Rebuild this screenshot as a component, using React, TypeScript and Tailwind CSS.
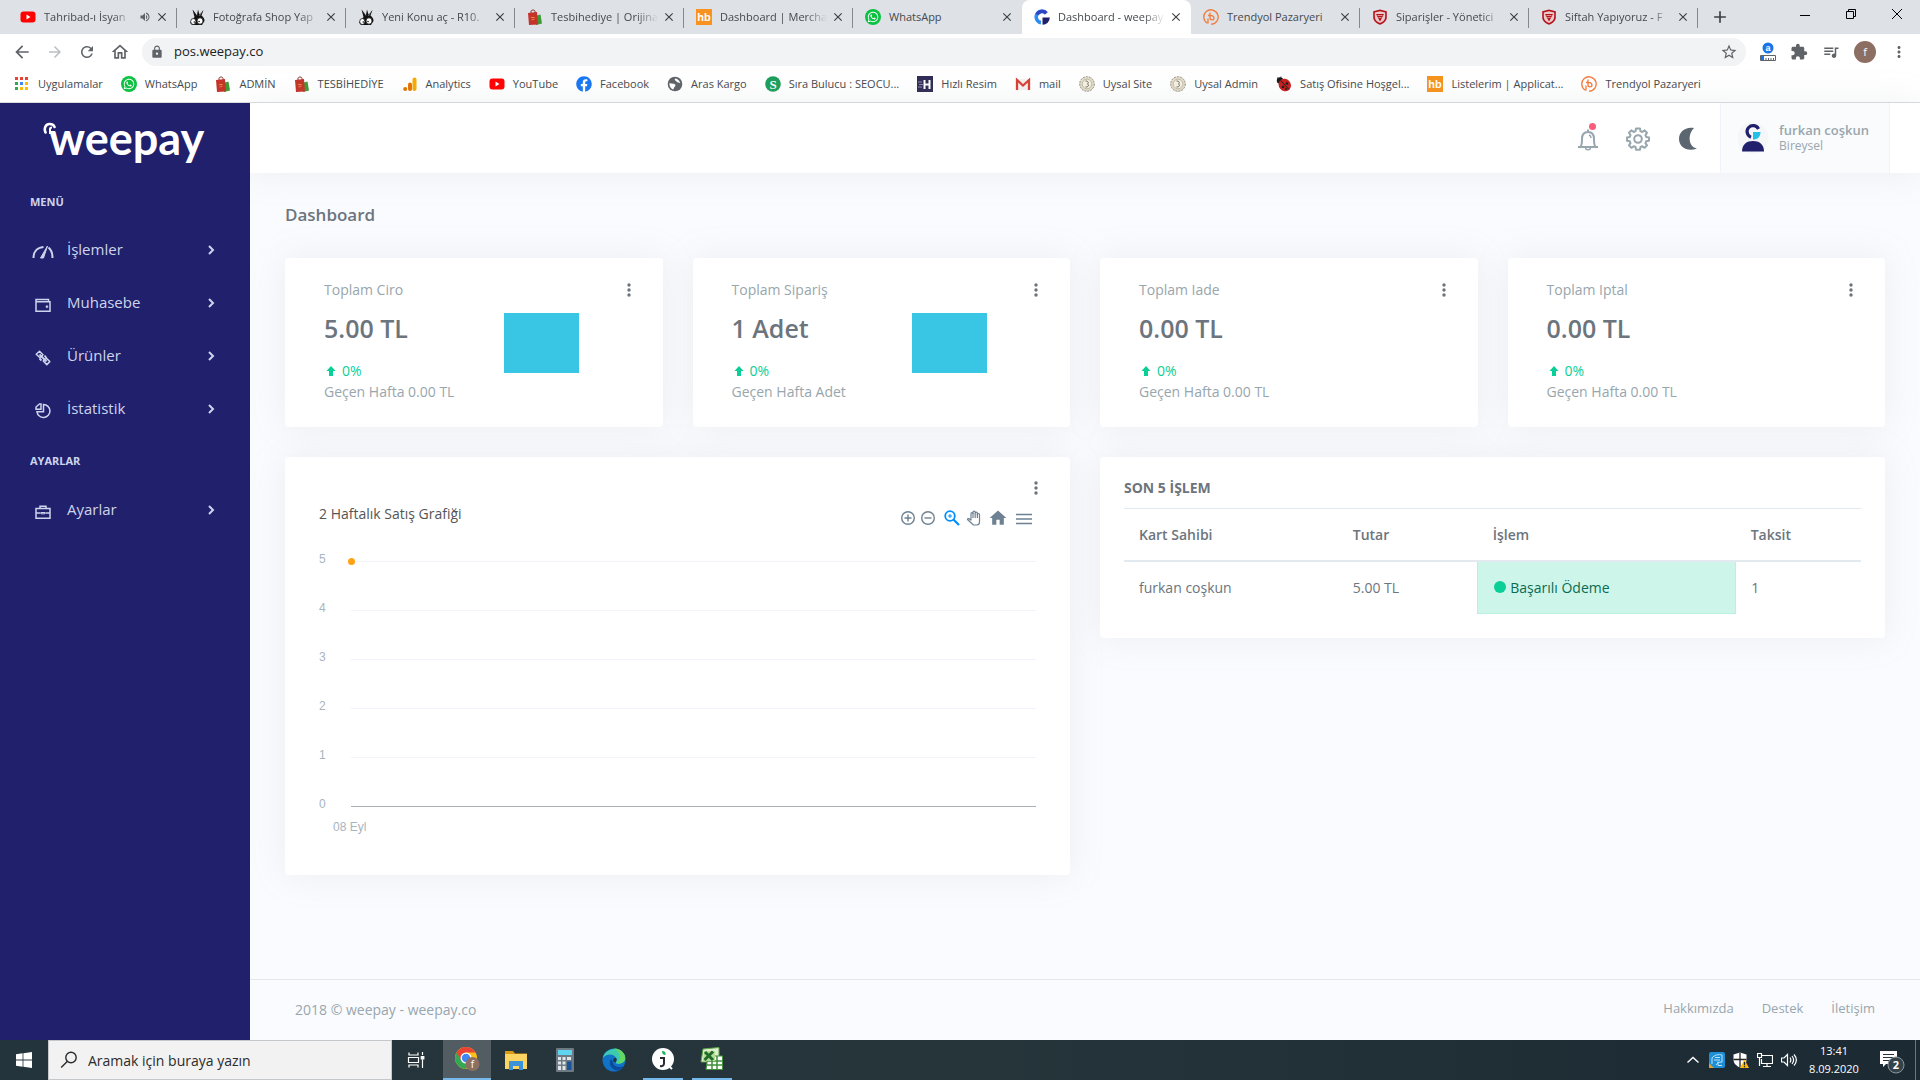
import type { ReactNode } from "react";
import { FaFacebook, FaWhatsapp } from "react-icons/fa";
import {
  MdAdd,
  MdArrowBack,
  MdArrowForward,
  MdClose,
  MdExtension,
  MdHome,
  MdLock,
  MdMoreVert,
  MdOutlineHome,
  MdQueueMusic,
  MdRefresh,
  MdStarOutline,
  MdVolumeUp,
} from "react-icons/md";

/* ---------- favicons ---------- */

const YoutubeIcon = () => (
  <svg viewBox="0 0 16 16" className="size-4 shrink-0">
    <rect x="0.5" y="2.5" width="15" height="11" rx="3" fill="#f00" />
    <path d="M6.5 5.5 10.5 8l-4 2.500z" fill="#fff" />
  </svg>
);

const WhatsappIcon = () => (
  <span className="flex size-4 shrink-0 items-center justify-center rounded-full bg-[#0dc143]">
    <FaWhatsapp className="size-3 text-white" />
  </span>
);

const RabbitIcon = () => (
  <svg viewBox="0 0 16 16" className="size-4 shrink-0">
    <path d="M3.500 0.500 8 6 9 0.500l1.500 5L14.500 1 12.500 6.500c2 1.500 3 3 3 5.500L13 16H3L1 13.500 5.500 8z" fill="#111" />
    <path d="M5.500 2 8 6.500M12.500 3 10.500 7" stroke="#ddd" strokeWidth="0.500" />
    <ellipse cx="4.300" cy="12.500" rx="2.600" ry="3" fill="#fff" stroke="#111" strokeWidth="0.800" />
    <ellipse cx="11" cy="12" rx="3" ry="3.200" fill="#fff" stroke="#111" strokeWidth="0.800" />
    <circle cx="5.300" cy="13" r="0.800" fill="#111" />
    <circle cx="10" cy="12.500" r="0.800" fill="#111" />
  </svg>
);

const BagIcon = () => (
  <svg viewBox="0 0 16 16" className="size-4 shrink-0">
    <path d="M4 5V2.500C4 0.500 8 0.500 8 2.500V5" fill="none" stroke="#7d2a22" />
    <path d="M8 7l5.500-1.500 1.500 9L9 16z" fill="#3f9b35" />
    <path d="M1 4 10 3l1 12.500-9 0.500z" fill="#c5342b" />
    <path d="M4 8.500h3.500M4.500 11l3-1" stroke="#e58b3a" />
  </svg>
);

const HbIcon = () => (
  <svg viewBox="0 0 16 16" className="size-4 shrink-0">
    <rect width="16" height="16" fill="#f7931e" />
    <text x="8" y="12" textAnchor="middle" fontFamily="Liberation Sans" fontWeight="700" fontSize="11" fill="#fff">
      hb
    </text>
  </svg>
);

const WeepayIcon = () => (
  <svg viewBox="0 0 16 16" className="size-4 shrink-0">
    <path d="M12.300 4.300A5.700 5.700 0 1 0 7 13.600" fill="none" stroke="#2b8df0" strokeWidth="3.600" />
    <path d="M12.300 4.300A5.700 5.700 0 0 0 3 5.500" fill="none" stroke="#2f45c4" strokeWidth="3.600" />
    <path d="M8.500 8.500H15.800a7.200 7.200 0 0 1-7.300 7.300z" fill="#1f1f6b" />
  </svg>
);

const TrendyolIcon = () => (
  <svg viewBox="0 0 16 16" className="size-4 shrink-0" fill="none" stroke="#f27a3a" strokeWidth="1.300">
    <path d="M4.500 14.300A7.200 7.200 0 1 1 8 15.200" />
    <path d="M7 3.500V9c0 2.500 4 2.500 4 0S8 6 5 6.500M5 9.500v5" />
  </svg>
);

const ShieldIcon = () => (
  <svg viewBox="0 0 16 16" className="size-4 shrink-0">
    <path d="M8 0.500 14.800 2.200V8c0 4-3 6.300-6.800 7.800C4.200 14.300 1.200 12 1.200 8V2.200z" fill="#b5121b" />
    <path d="M8 2.200 13.200 3.500V8c0 3-2.200 4.800-5.200 6C5 12.800 2.800 11 2.800 8V3.500z" fill="#e9c9ca" />
    <path d="M4 5h8L8 12.500z" fill="#b5121b" />
    <path d="M5.500 6.500h5M6.500 8.500h3" stroke="#e9c9ca" strokeWidth="0.700" />
  </svg>
);

const AppsIcon = () => (
  <svg viewBox="0 0 16 16" className="size-4 shrink-0">
    <path d="M1 1h3v3H1zM6 1h3v3H6zM11 1h3v3h-3z" fill="#ea4335" />
    <path d="M1 6h3v3H1zM1 11h3v3H1z" fill="#34a853" />
    <path d="M6 6h3v3H6z" fill="#4285f4" />
    <path d="M11 6h3v3h-3zM6 11h3v3H6zM11 11h3v3h-3z" fill="#fbbc05" />
  </svg>
);

const AnalyticsIcon = () => (
  <svg viewBox="0 0 16 16" className="size-4 shrink-0">
    <rect x="10.500" y="1.500" width="4" height="13.500" rx="2" fill="#f9ab00" />
    <rect x="6" y="6.500" width="4" height="8.500" rx="2" fill="#e37400" />
    <circle cx="3.200" cy="13" r="2" fill="#e37400" />
  </svg>
);

const GlobeIcon = () => (
  <svg viewBox="0 0 16 16" className="size-4 shrink-0">
    <circle cx="8" cy="8" r="7.300" fill="#5f6368" />
    <path d="M8 2.500c-1 2 1 2 2 3.500 1 1 3 0 3.500 2C13 6 12 3 8 2.500zM2.500 7c2 1 5 0 6 2 0 2-2 2-2 4.500C4 13 2 10 2.500 7z" fill="#fff" />
  </svg>
);

const SeoIcon = () => (
  <svg viewBox="0 0 16 16" className="size-4 shrink-0">
    <circle cx="8" cy="8" r="7.800" fill="#1d9f5b" />
    <text x="8" y="12.500" textAnchor="middle" fontFamily="Liberation Serif" fontWeight="700" fontSize="13" fill="#fff">
      S
    </text>
  </svg>
);

const HizliIcon = () => (
  <svg viewBox="0 0 16 16" className="size-4 shrink-0">
    <rect width="16" height="16" fill="#302c55" />
    <path d="M1 6h4M2 8.500h4M1 11h4" stroke="#8d8ab0" />
    <path d="M7.500 4v9M12.500 4v9M7.500 8.500h5" stroke="#fff" strokeWidth="2" />
  </svg>
);

const MailIcon = () => (
  <svg viewBox="0 0 16 16" className="size-4 shrink-0">
    <path d="M1 3h14v11H1z" fill="#f4f0ef" />
    <path d="M2 14V4l6 5.500L14 4v10" fill="none" stroke="#d93f35" strokeWidth="2.300" />
  </svg>
);

const UysalIcon = () => (
  <svg viewBox="0 0 16 16" className="size-4 shrink-0">
    <circle cx="8" cy="8" r="7.300" fill="#e3dccb" stroke="#8d8672" strokeWidth="0.900" strokeDasharray="2 1" />
    <circle cx="8" cy="8" r="4.800" fill="#f4f0e4" stroke="#a59d87" strokeWidth="0.600" />
    <path d="M6.500 5c3 0 3.500 2 2 3 2 1 1 3-2 3" fill="none" stroke="#6c6553" />
  </svg>
);

const LadybugIcon = () => (
  <svg viewBox="0 0 16 16" className="size-4 shrink-0">
    <circle cx="4" cy="4.500" r="3.200" fill="#1a1a1a" />
    <path d="M1 1.500 3 3M5 0.500 4.500 3" stroke="#1a1a1a" strokeWidth="0.700" />
    <ellipse cx="8.800" cy="9" rx="6" ry="6.500" transform="rotate(-40 8.800 9)" fill="#c91f1f" />
    <path d="M4.500 4.500 13 13.500" stroke="#1a1a1a" />
    <circle cx="7" cy="11" r="1.300" fill="#1a1a1a" />
    <circle cx="11" cy="7.500" r="1.300" fill="#1a1a1a" />
    <circle cx="10" cy="13" r="1" fill="#1a1a1a" />
  </svg>
);

/* ---------- browser chrome ---------- */

type Tab = { title: string; icon: ReactNode; active?: boolean; sound?: boolean; noDivider?: boolean };

const tabs: Tab[] = [
  { title: "Tahribad-ı İsyan", icon: <YoutubeIcon />, sound: true },
  { title: "Fotoğrafa Shop Yap", icon: <RabbitIcon /> },
  { title: "Yeni Konu aç - R10.", icon: <RabbitIcon /> },
  { title: "Tesbihediye | Orijina", icon: <BagIcon /> },
  { title: "Dashboard | Mercha", icon: <HbIcon /> },
  { title: "WhatsApp", icon: <WhatsappIcon />, noDivider: true },
  { title: "Dashboard - weepay", icon: <WeepayIcon />, active: true },
  { title: "Trendyol Pazaryeri", icon: <TrendyolIcon /> },
  { title: "Siparişler - Yönetici", icon: <ShieldIcon /> },
  { title: "Siftah Yapıyoruz - F", icon: <ShieldIcon /> },
];

const bookmarks = [
  { title: "Uygulamalar", icon: <AppsIcon /> },
  { title: "WhatsApp", icon: <WhatsappIcon /> },
  { title: "ADMİN", icon: <BagIcon /> },
  { title: "TESBİHEDİYE", icon: <BagIcon /> },
  { title: "Analytics", icon: <AnalyticsIcon /> },
  { title: "YouTube", icon: <YoutubeIcon /> },
  { title: "Facebook", icon: <FaFacebook className="size-4 shrink-0 text-[#1877f2]" /> },
  { title: "Aras Kargo", icon: <GlobeIcon /> },
  { title: "Sıra Bulucu : SEOCU...", icon: <SeoIcon /> },
  { title: "Hızlı Resim", icon: <HizliIcon /> },
  { title: "mail", icon: <MailIcon /> },
  { title: "Uysal Site", icon: <UysalIcon /> },
  { title: "Uysal Admin", icon: <UysalIcon /> },
  { title: "Satış Ofisine Hoşgel...", icon: <LadybugIcon /> },
  { title: "Listelerim | Applicat...", icon: <HbIcon /> },
  { title: "Trendyol Pazaryeri", icon: <TrendyolIcon /> },
];

function TabStrip() {
  return (
    <div className="flex h-[34px] items-stretch bg-[#dee1e6] pl-2">
      {tabs.map((tab) => (
        <div
          key={tab.title}
          className={`relative flex w-[169px] items-center pl-3 pr-2 ${tab.active ? "rounded-t-lg bg-white" : ""}`}
        >
          {tab.icon}
          <span
            className={`ml-2 min-w-0 flex-1 whitespace-nowrap text-[11px] text-[#45494d] ${
              tab.title.length > 15 && tab.title !== "Trendyol Pazaryeri"
                ? "[mask-image:linear-gradient(to_right,black_80%,transparent)]"
                : ""
            }`}
          >
            {tab.title}
          </span>
          {tab.sound && <MdVolumeUp className="ml-2 size-3 text-[#5f6368]" />}
          <button aria-label="Kapat" className="ml-1 text-[#3c4043]">
            <MdClose className="size-3.5" />
          </button>
          {!tab.active && !tab.noDivider && <span className="absolute right-0 top-2 h-5 w-px bg-[#85888c]" />}
        </div>
      ))}
      <button aria-label="Yeni sekme" className="px-3 text-[#3c4043]">
        <MdAdd className="size-5" />
      </button>
      <div className="ml-auto flex items-start pt-1.5 text-black">
        <button aria-label="Küçült" className="flex w-[46px] justify-center">
          <svg viewBox="0 0 16 16" className="size-4">
            <path d="M3 9.500h10" stroke="currentColor" />
          </svg>
        </button>
        <button aria-label="Önceki boyut" className="flex w-[46px] justify-center">
          <svg viewBox="0 0 16 16" className="size-4" fill="none" stroke="currentColor">
            <path d="M3.500 5.500h7v7h-7zM5.500 5.500v-2h7v7h-2" />
          </svg>
        </button>
        <button aria-label="Pencereyi kapat" className="flex w-[46px] justify-center">
          <svg viewBox="0 0 16 16" className="size-4">
            <path d="m3 3 10 10M13 3 3 13" stroke="currentColor" />
          </svg>
        </button>
      </div>
    </div>
  );
}

function AddressBar() {
  return (
    <div className="flex h-[36px] items-center bg-white px-3 text-[#5f6368]">
      <div className="flex items-center gap-3.5 pr-3">
        <button aria-label="Geri">
          <MdArrowBack className="size-5" />
        </button>
        <button aria-label="İleri" className="text-[#bcbec1]">
          <MdArrowForward className="size-[18px]" />
        </button>
        <button aria-label="Yenile">
          <MdRefresh className="size-[18px]" />
        </button>
        <button aria-label="Ana sayfa">
          <MdOutlineHome className="size-5" />
        </button>
      </div>
      <div className="flex h-7 flex-1 items-center rounded-full bg-[#f1f3f4] pl-2 pr-2">
        <MdLock className="size-3.5" />
        <input
          aria-label="Adres çubuğu"
          defaultValue="pos.weepay.co"
          className="ml-2.5 flex-1 bg-transparent text-[13px] text-[#202124] outline-none"
        />
        <MdStarOutline className="size-[18px]" />
      </div>
      <div className="ml-3.5 flex items-center gap-3.5">
        <svg viewBox="0 0 16 20" className="h-5 w-4">
          <circle cx="8" cy="6" r="5.500" fill="#1a73e8" />
          <text x="8" y="9" textAnchor="middle" fontFamily="Liberation Sans" fontWeight="700" fontSize="9" fill="#fff">
            a
          </text>
          <path d="M0.500 13.500h15v5H0.500z" fill="#fff" stroke="#5f6368" />
          <path d="M1 14h3v4H1z" fill="#1a73e8" />
          <path d="M6 18v-2M8.500 18v-2M11 18v-2M13.500 18v-2" stroke="#5f6368" />
        </svg>
        <MdExtension className="size-[18px]" />
        <MdQueueMusic className="size-[18px]" />
        <span className="flex size-[22px] items-center justify-center rounded-full bg-[#8d6e63] text-[11px] text-white">
          f
        </span>
        <MdMoreVert className="size-[18px]" />
      </div>
    </div>
  );
}

function BookmarksBar() {
  return (
    <nav className="flex h-[33px] items-center gap-[18px] whitespace-nowrap border-b border-[#dadce0] bg-white pb-1 pl-3.5">
      {bookmarks.map((b) => (
        <a key={b.title} href="#" className="flex items-center gap-2 text-[11px] text-[#45494d]">
          {b.icon}
          {b.title}
        </a>
      ))}
    </nav>
  );
}

/* ---------- sidebar ---------- */

const stroke = { fill: "none", stroke: "currentColor", strokeWidth: 1.5 };

const MeterIcon = () => (
  <svg viewBox="0 0 22 16" className="h-4 w-[22px]" {...stroke} strokeWidth={2}>
    <path d="M1.500 14C1.500 8 5 3.500 11.500 3" />
    <path d="M16.500 3.500c2.500 2 4 6 4 10.500" />
    <path d="M15.500 2 8.500 14h3z" fill="currentColor" strokeWidth={1} />
  </svg>
);

const WalletIcon = () => (
  <svg viewBox="0 0 16 16" className="size-4" {...stroke}>
    <path d="M1 4.800V2.500h12.500v2M1 4.800v9.500h14V4.800z" />
    <path d="M11 8.800h1.800v1.800H11z" fill="currentColor" strokeWidth={0.500} />
  </svg>
);

const ChainIcon = () => (
  <svg viewBox="0 0 16 16" className="size-4" {...stroke}>
    <path d="M4.500 1.200 8 4.700 5 7.700 1.200 4.200zM11.500 8.300l3.300 3.300-3 3L8.200 11z" strokeLinejoin="round" />
    <path d="m4.500 4.500 7 7M9.500 5.500l2 2.500M4.500 8.500l2 2" strokeWidth={1.800} />
  </svg>
);

const PieIcon = () => (
  <svg viewBox="0 0 16 16" className="size-4" {...stroke}>
    <path d="M8.500 1.500A6.500 6.500 0 1 1 2 8.800h6.500z" />
    <path d="M6 1H4.500L1 4v2.200h5z" />
  </svg>
);

const BriefcaseIcon = () => (
  <svg viewBox="0 0 16 16" className="size-4" {...stroke}>
    <path d="M1 4.500h14v9.800H1zM5 4.500V2.200h6v2.300M1 9h4.500M10.500 9H15" />
    <path d="M6 8.500h4v1.300H6z" strokeWidth={1} />
  </svg>
);

function NavItem({ icon, label }: { icon: ReactNode; label: string }) {
  return (
    <li>
      <a href="#" className="flex h-[53px] items-center pl-8 pr-[35px] text-[15px] text-[#ced4ec]">
        <span className="flex w-[22px] justify-center pt-1">{icon}</span>
        <span className="ml-[13px] flex-1">{label}</span>
        <svg viewBox="0 0 8 12" className="h-3 w-2" fill="none" stroke="currentColor" strokeWidth="2">
          <path d="m2 2 4 4-4 4" />
        </svg>
      </a>
    </li>
  );
}

function Sidebar() {
  return (
    <aside className="relative z-10 w-[250px] shrink-0 bg-[#20206c]">
      <a href="#" aria-label="weepay" className="relative flex h-[70px] items-center pl-[49px]">
        <span className="font-[Lato] text-[45px] font-bold leading-none text-white">weepay</span>
        <svg viewBox="0 0 14 12" className="absolute left-[43px] top-[19px] h-3 w-3.5" fill="none" stroke="#fff">
          <path d="M2.500 10.500C0.500 6 3 2 6.500 2c3 0 4.500 1 5 3" strokeWidth="2.600" strokeLinecap="round" />
          <path d="M7 12V7c0-1 1-1.500 2-1.500" strokeWidth="2" />
        </svg>
      </a>
      <nav>
        <h2 className="flex h-[50px] items-center pl-[30px] pt-2 text-[11px] font-bold text-[#ced4ec]">MENÜ</h2>
        <ul>
          <NavItem icon={<MeterIcon />} label="İşlemler" />
          <NavItem icon={<WalletIcon />} label="Muhasebe" />
          <NavItem icon={<ChainIcon />} label="Ürünler" />
          <NavItem icon={<PieIcon />} label="İstatistik" />
        </ul>
        <h2 className="flex h-12 items-center pl-[30px] pt-1 text-[11px] font-bold text-[#ced4ec]">AYARLAR</h2>
        <ul>
          <NavItem icon={<BriefcaseIcon />} label="Ayarlar" />
        </ul>
      </nav>
    </aside>
  );
}

/* ---------- page ---------- */

function TopBar() {
  return (
    <header className="flex h-[70px] items-center justify-end bg-white pr-[30px] text-[#98a6ad] shadow-[0_0_35px_0_rgba(154,161,171,0.15)]">
      <div className="mr-5 flex items-center gap-[26px] pt-0.5">
        <button aria-label="Bildirimler" className="relative">
          <svg viewBox="0 0 24 24" className="size-6" fill="none" stroke="currentColor" strokeWidth="2">
            <path d="M2 20h20M4.500 20C6 18 6 16 6 12c0-4.500 2.500-7 6-7s6 2.500 6 7c0 4 0 6 1.500 8M12 5V2.500" />
            <path d="M9.500 20.500c0 3 5 3 5 0M13 8c1.500 0.500 2 1.500 2 3" strokeWidth="1.500" />
          </svg>
          <span className="absolute -top-1 right-1 size-[7px] rounded-full bg-[#fa5c7c]" />
        </button>
        <button aria-label="Ayarlar">
          <svg viewBox="0 0 24 24" className="size-6" fill="none" stroke="currentColor" strokeWidth="2">
            <path
              strokeLinejoin="round"
              d="M10 1.500h4l0.500 2.700 1.800 0.800 2.300-1.600 2.400 2.400-1.500 2.300 0.700 1.900 2.800 0.400v3.400l-2.800 0.500-0.700 1.800 1.500 2.300-2.400 2.400-2.300-1.500-1.800 0.700-0.500 2.800h-4l-0.500-2.800-1.800-0.700-2.300 1.500L3 18.400l1.500-2.300-0.700-1.800L1 13.800v-3.400l2.800-0.400 0.700-1.900L3 5.800l2.400-2.400L7.700 5l1.800-0.800z"
            />
            <circle cx="12" cy="12" r="3.800" />
          </svg>
        </button>
        <button aria-label="Karanlık mod">
          <svg viewBox="0 0 24 24" className="size-6">
            <path d="M18 1C9-0.500 3 5 3 12c0 8 8.500 13.500 18 9.500C12 20 11.500 7 18 1z" fill="#5c6670" />
          </svg>
        </button>
      </div>
      <button className="flex h-full items-center border-x border-[#f1f3fa] bg-[#fafbfd] pl-4 pr-5 text-left">
        <svg viewBox="0 0 32 32" className="size-8">
          <circle cx="16" cy="16" r="15.500" fill="#f5f6f8" />
          <path d="M5 29.500C5 22 10 19 16 19s11 3 11 10.500z" fill="#20206c" />
          <path d="M21.500 7A6 6 0 1 0 14 15.200" fill="none" stroke="#20206c" strokeWidth="3.200" />
          <path d="M16 10h7.500c0 5-3 7.500-7.500 7.500z" fill="#23bfe6" />
        </svg>
        <span className="ml-2.5">
          <span className="block text-[13px] font-semibold leading-4">furkan coşkun</span>
          <span className="block text-[12px] leading-4">Bireysel</span>
        </span>
      </button>
    </header>
  );
}

const MoreDots = () => (
  <button aria-label="Seçenekler" className="text-[#6c757d]">
    <svg viewBox="0 0 4 16" className="h-4 w-1" fill="currentColor">
      <circle cx="2" cy="3" r="1.700" />
      <circle cx="2" cy="8" r="1.700" />
      <circle cx="2" cy="13" r="1.700" />
    </svg>
  </button>
);

const card = "rounded bg-white shadow-[0_0_35px_0_rgba(154,161,171,0.15)]";

type Stat = { label: string; value: string; last: string; chart?: boolean };

const stats: Stat[] = [
  { label: "Toplam Ciro", value: "5.00 TL", last: "Geçen Hafta 0.00 TL", chart: true },
  { label: "Toplam Sipariş", value: "1 Adet", last: "Geçen Hafta Adet", chart: true },
  { label: "Toplam Iade", value: "0.00 TL", last: "Geçen Hafta 0.00 TL" },
  { label: "Toplam Iptal", value: "0.00 TL", last: "Geçen Hafta 0.00 TL" },
];

function StatCard({ label, value, last, chart }: Stat) {
  return (
    <section className={`${card} flex h-[169px] pl-[39px] pr-8 pt-5`}>
      <div className="w-[180px] text-[14px] text-[#98a6ad]">
        <h3 className="leading-6">{label}</h3>
        <p className="mt-2.5 text-[25px] font-semibold leading-8 text-[#6c757d]">{value}</p>
        <p className="mt-4 flex items-center leading-[21px] text-[#0acf97]">
          <svg viewBox="0 0 14 14" className="mr-1 size-3.5">
            <path d="M7 2 11.500 7H9v5H5V7H2.500z" fill="currentColor" />
          </svg>
          0%
        </p>
        <p className="leading-[21px]">{last}</p>
      </div>
      <div className="flex-1">{chart && <div className="mt-[35px] h-[60px] w-[75px] bg-[#39c6e5]" />}</div>
      <div className="pt-0.5">
        <MoreDots />
      </div>
    </section>
  );
}

function ChartToolbar() {
  return (
    <div className="flex items-center text-[#6e8192]">
      <button aria-label="Yakınlaştır">
        <svg viewBox="0 0 20 20" className="size-5" fill="none" stroke="currentColor" strokeWidth="1.400">
          <path d="M10 6.500v7M6.500 10h7" />
          <circle cx="10" cy="10" r="6.300" />
        </svg>
      </button>
      <button aria-label="Uzaklaştır">
        <svg viewBox="0 0 20 20" className="size-5" fill="none" stroke="currentColor" strokeWidth="1.400">
          <path d="M6.500 10h7" />
          <circle cx="10" cy="10" r="6.300" />
        </svg>
      </button>
      <button aria-label="Seçimi yakınlaştır" className="ml-1 text-[#008ffb]">
        <svg viewBox="0 0 20 20" className="size-5" fill="none" stroke="currentColor" strokeWidth="1.800">
          <circle cx="8" cy="8" r="4.800" />
          <path d="m11.500 11.500 5.500 5.500" strokeWidth="2.200" />
          <path d="M8 6v4M6 8h4" strokeWidth="1" />
        </svg>
      </button>
      <button aria-label="Kaydır" className="ml-0.5">
        <svg viewBox="0 0 20 20" className="size-5" fill="none" stroke="currentColor" strokeWidth="1.200" strokeLinejoin="round">
          <path d="M7 12V5.500c0-1.300 2-1.300 2 0V4c0-1.300 2.200-1.300 2.200 0v1c0-1.300 2.200-1.300 2.200 0v1.500c0-1.300 2.100-1.300 2.100 0V14c0 2-1 3-3 3H9.500L3.500 11.500c0-1.500 2-1 3.500 0.500z" />
          <path d="M9 5v5M11.200 5v5M13.400 5.500V10" />
        </svg>
      </button>
      <button aria-label="Sıfırla" className="ml-1">
        <MdHome className="size-5" />
      </button>
      <button aria-label="Menü" className="ml-1.5">
        <svg viewBox="0 0 20 20" className="size-5" stroke="currentColor" strokeWidth="1.700">
          <path d="M2 6.500h16M2 11h16M2 15.500h16" />
        </svg>
      </button>
    </div>
  );
}

function SalesChart() {
  return (
    <section className={`${card} h-[418px] px-8 pt-[23px]`}>
      <div className="flex justify-end">
        <MoreDots />
      </div>
      <div className="flex justify-between pl-0.5 pr-1 pt-1">
        <h3 className="pt-1 text-[14px] leading-5 text-[#555]">2 Haftalık Satış Grafiği</h3>
        <div className="pt-2">
          <ChartToolbar />
        </div>
      </div>
      <div className="mt-[23px] pl-0.5 pr-0.5 font-['Liberation_Sans'] text-[12px] leading-4 text-[#a8b5c0]">
        {[5, 4, 3, 2, 1, 0].map((n) => (
          <div key={n} className="flex h-[49px] items-start">
            <span className="w-8">{n}</span>
            <div className={`relative mt-2.5 flex-1 border-t ${n === 0 ? "border-[#a8b0b8]" : "border-[#f1f3fa]"}`}>
              {n === 5 && <span className="absolute -left-[3px] -top-1 size-[7px] rounded-full bg-[#ffa216]" />}
            </div>
          </div>
        ))}
        <p className="-mt-[26px] pl-3.5">08 Eyl</p>
      </div>
    </section>
  );
}

function RecentTable() {
  return (
    <section className={`${card} self-start px-6 pb-6 pt-5`}>
      <h3 className="text-[14px] font-bold leading-[22px] text-[#6c757d]">SON 5 İŞLEM</h3>
      <table className="mt-[9px] w-full table-fixed border-t border-[#e3eaef] text-left text-[14px] text-[#6c757d]">
        <colgroup>
          <col className="w-[29%]" />
          <col className="w-[19%]" />
          <col className="w-[35%]" />
          <col className="w-[17%]" />
        </colgroup>
        <thead>
          <tr className="h-[52px] border-b-2 border-[#e3eaef]">
            {["Kart Sahibi", "Tutar", "İşlem", "Taksit"].map((h) => (
              <th key={h} scope="col" className="px-[15px] font-semibold">
                {h}
              </th>
            ))}
          </tr>
        </thead>
        <tbody>
          <tr className="h-[53px]">
            <td className="px-[15px]">furkan coşkun</td>
            <td className="px-[15px]">5.00 TL</td>
            <td className="border border-t-0 border-[#b9f0e0] bg-[#cdf5ea] px-4 text-[#0a6b52]">
              <span className="flex items-center gap-1">
                <span className="size-3 rounded-full bg-[#0acf97]" />
                Başarılı Ödeme
              </span>
            </td>
            <td className="px-[15px]">1</td>
          </tr>
        </tbody>
      </table>
    </section>
  );
}

function Footer() {
  return (
    <footer className="flex h-[61px] items-center justify-between border-t border-[#e3e6ea] px-[45px] pb-0.5 text-[14px] text-[#98a6ad]">
      <span>2018 © weepay - weepay.co</span>
      <nav className="flex gap-7 text-[13px]">
        <a href="#">Hakkımızda</a>
        <a href="#">Destek</a>
        <a href="#">İletişim</a>
      </nav>
    </footer>
  );
}

/* ---------- taskbar ---------- */

function TaskButton({ label, children, state = "w-12" }: { label: string; children: ReactNode; state?: string }) {
  return (
    <button aria-label={label} className={`flex h-10 items-center justify-center ${state}`}>
      {children}
    </button>
  );
}

const ChromeIcon = () => (
  <svg viewBox="0 0 26 26" className="size-[26px]">
    <circle cx="12" cy="12" r="11" fill="#fbc116" />
    <path d="M12 12 2.500 6.500A11 11 0 0 0 12 23l4-7z" fill="#34a853" />
    <path d="M12 6.500h9.500A11 11 0 0 0 2.500 6.500L7 14z" fill="#ea4335" />
    <circle cx="12" cy="12" r="5.500" fill="#fff" />
    <circle cx="12" cy="12" r="4.200" fill="#4285f4" />
    <circle cx="18.500" cy="18" r="7" fill="#8d6e63" />
    <text x="18.500" y="21.500" textAnchor="middle" fontFamily="Open Sans" fontSize="10" fill="#fff">
      f
    </text>
  </svg>
);

const ExplorerIcon = () => (
  <svg viewBox="0 0 24 24" className="size-6">
    <path d="M1 3h8l2 2.500h12V7H1z" fill="#d99a15" />
    <path d="M1 6h22v15H1z" fill="#fcd462" />
    <path d="M5 13h14v9h-4v-4H9v4H5z" fill="#3a93d8" />
  </svg>
);

const CalculatorIcon = () => (
  <svg viewBox="0 0 20 24" className="h-6 w-5">
    <rect x="1" width="18" height="24" rx="1" fill="#6d7a83" />
    <path d="M3 2h14v5H3z" fill="#5fd4ee" />
    <path d="M3 9h3v3H3zM7.500 9h3v3h-3zM12 9h4v3h-4zM3 13.500h3v3H3zM7.500 13.500h3v3h-3zM3 18h3v4H3zM7.500 18h3v4h-3z" fill="#dfe5e8" />
    <path d="M12 13.500h4.500V22H12z" fill="#17559a" />
  </svg>
);

const EdgeIcon = () => (
  <svg viewBox="0 0 24 24" className="size-6">
    <circle cx="12" cy="12" r="11.500" fill="#1173c7" />
    <path d="M0.800 10C3 0 18-3 22.500 7c2.500 7-4 9.500-8 8.500-2-1 1-2 0-5C12 5.500 5 5 0.800 10z" fill="#3ccbb0" />
    <path d="M12 0.500C19 0.500 24 6 23.300 11c-1 4-5 5-8.800 4.500C20 13 19 4 12 0.500z" fill="#63d764" />
    <path d="M9 11c-3 4 0 10.500 6 11.500 3-0.500 5.500-2 7-4.500-4 2-11 1-11-4z" fill="#0c4a9c" />
    <path d="M11.500 13.500c-1-2 0.500-4 2.500-3.500 1.500 1.500 0 3.500-0.500 4.500z" fill="#24343c" />
  </svg>
);

const JIcon = () => (
  <svg viewBox="0 0 24 24" className="size-6">
    <circle cx="12" cy="12" r="11" fill="#fff" />
    <path d="M11 4c3 0 4 1.500 3.500 4C12 8 11 6.500 11 4z" fill="#1eb45a" />
    <path d="M9 11h4v5.500c0 2-1.500 3-4 2.500" fill="none" stroke="#2b2b33" strokeWidth="2" />
    <path d="m17 18 4 4" stroke="#fff" strokeWidth="2" />
  </svg>
);

const ExcelIcon = () => (
  <svg viewBox="0 0 24 24" className="size-6">
    <path d="M3 2 19 0.500V15H1z" fill="#dff0cf" stroke="#5aa546" />
    <path d="M8 9h14.500v13.500H6z" fill="#fff" stroke="#3f8f3a" />
    <path d="M7 14h15M7 18h15M12 9v13M17 9v13" stroke="#3f8f3a" strokeWidth="1.500" />
    <path d="M4 4h11v10H3z" fill="#b6dc9a" />
    <path d="m5 5 8 8M13 4.500 4.500 13" stroke="#1e6b2a" strokeWidth="3" />
  </svg>
);

function Taskbar() {
  return (
    <footer className="flex h-10 items-stretch bg-linear-to-r from-[#24343c] via-[#26353a] to-[#1b2a33] text-white">
      <TaskButton label="Başlat">
        <svg viewBox="0 0 16 16" className="size-4" fill="#fff">
          <path d="M0 2.200 6.600 1.300v6.300H0zM7.400 1.200 16 0v7.600H7.400zM0 8.400h6.600v6.300L0 13.800zM7.400 8.400H16V16l-8.600-1.200z" />
        </svg>
      </TaskButton>
      <label className="flex w-[344px] items-center border border-[#c4c8ca] bg-[#f2f2f2] pl-[11px] text-[#2b2b2b]">
        <svg viewBox="0 0 18 18" className="size-[18px]" fill="none" stroke="currentColor" strokeWidth="1.400">
          <circle cx="11" cy="6.500" r="5.200" />
          <path d="m7.200 10.500-6 6" />
        </svg>
        <input
          aria-label="Arama"
          placeholder="Aramak için buraya yazın"
          className="ml-2.5 flex-1 bg-transparent text-[14px] outline-none placeholder:text-[#2b2b2b]"
        />
      </label>
      <TaskButton label="Görev görünümü">
        <svg viewBox="0 0 18 18" className="size-[18px]" fill="none" stroke="#fff" strokeWidth="1.200">
          <path d="M2 1.500v2.500h9V1.500M2 16.500V14h9v2.500M1.500 6.500h10v5h-10zM15.500 1v3M15.500 8.500V17" />
          <path d="M14.300 5.500h2.500V8h-2.500z" fill="#fff" />
        </svg>
      </TaskButton>
      <div className="flex gap-px pl-[3px]">
        <TaskButton label="Chrome" state="w-12 border-b-2 border-[#76b9ed] bg-[#515c63]">
          <ChromeIcon />
        </TaskButton>
        <TaskButton label="Dosya Gezgini">
          <ExplorerIcon />
        </TaskButton>
        <TaskButton label="Hesap Makinesi">
          <CalculatorIcon />
        </TaskButton>
        <TaskButton label="Edge">
          <EdgeIcon />
        </TaskButton>
      </div>
      <div className="flex gap-[9px] pl-[5px]">
        <TaskButton label="Jivo" state="w-10 border-b-2 border-[#76b9ed]">
          <JIcon />
        </TaskButton>
        <TaskButton label="Excel" state="w-10 border-b-2 border-[#76b9ed]">
          <ExcelIcon />
        </TaskButton>
      </div>

      <div className="ml-auto flex items-center gap-2 pr-1">
        <svg viewBox="0 0 16 16" className="size-4" fill="none" stroke="#fff" strokeWidth="1.400">
          <path d="m2.500 10.500 5.500-5 5.500 5" />
        </svg>
        <svg viewBox="0 0 16 16" className="size-4">
          <rect width="16" height="16" rx="2" fill="#1c8fd6" />
          <path d="M3 12V6c2-3 7-4 10-3v7c-3 0-5 1-6 3M5 8h6M6 5.500h5M9 9.500v4h4" fill="none" stroke="#bfe4fa" />
          <path d="M0 11v5h5z" fill="#e0a030" />
        </svg>
        <svg viewBox="0 0 16 16" className="size-4">
          <path d="M7 0.500 13.500 2.500v5c0 4-3 6.500-6.500 8-3.500-1.500-6.500-4-6.500-8v-5z" fill="#fff" />
          <path d="M7 0.500v15M0.500 7.500h13" stroke="#222" strokeWidth="1.300" />
          <path d="m11.500 7.500 4.500 8.500H7z" fill="#fdb913" />
          <path d="M11.500 10v3.200M11.500 14v1.300" stroke="#222" strokeWidth="1.200" />
        </svg>
        <svg viewBox="0 0 16 16" className="size-4" fill="none" stroke="#fff" strokeWidth="1.200">
          <path d="M5 3.500h10.500v8H4.500V7M10 11.500V14M6 14.500h8M0.500 1.500h4v4h-4zM2.500 5.500V14" />
        </svg>
        <svg viewBox="0 0 16 16" className="size-4" fill="none" stroke="#fff" strokeWidth="1.200">
          <path d="M0.500 6H3l3.500-3.500v11L3 10H0.500zM9 5.500c1 1.500 1 3.500 0 5M11 4c2 2.500 2 5.500 0 8M13 2.500c3 3.500 3 7.500 0 11" />
        </svg>
        <div className="w-[58px] text-center text-[11px] leading-[18px]">
          <div>13:41</div>
          <div>8.09.2020</div>
        </div>
        <button aria-label="Bildirim merkezi" className="relative ml-1 flex w-8 justify-center">
          <svg viewBox="0 0 28 28" className="size-7">
            <path d="M3 5h17v13H9l-3 3v-3H3z" fill="#fff" />
            <path d="M6 8.500h11M6 11.500h11M6 14.500h7" stroke="#24343c" />
            <circle cx="19" cy="19" r="8" fill="#34424a" stroke="#8b959b" />
            <text x="19" y="23" textAnchor="middle" fontFamily="Open Sans" fontWeight="700" fontSize="11" fill="#fff">
              2
            </text>
          </svg>
        </button>
        <span className="h-10 w-px bg-[#6d787e]" />
      </div>
    </footer>
  );
}

export default function App() {
  return (
    <div className="flex min-h-screen flex-col font-['Open_Sans',sans-serif]">
      <TabStrip />
      <AddressBar />
      <BookmarksBar />
      <div className="flex flex-1 bg-[#fafbfe]">
        <Sidebar />
        <div className="flex min-w-0 flex-1 flex-col">
          <TopBar />
          <main className="flex-1 px-[35px]">
            <h1 className="pb-[30px] pt-7 text-[17px] font-semibold leading-[27px] text-[#6c757d]">Dashboard</h1>
            <div className="grid grid-cols-4 gap-[30px]">
              {stats.map((s) => (
                <StatCard key={s.label} {...s} />
              ))}
            </div>
            <div className="mt-[30px] grid grid-cols-2 gap-[30px]">
              <SalesChart />
              <RecentTable />
            </div>
          </main>
          <Footer />
        </div>
      </div>
      <Taskbar />
    </div>
  );
}
